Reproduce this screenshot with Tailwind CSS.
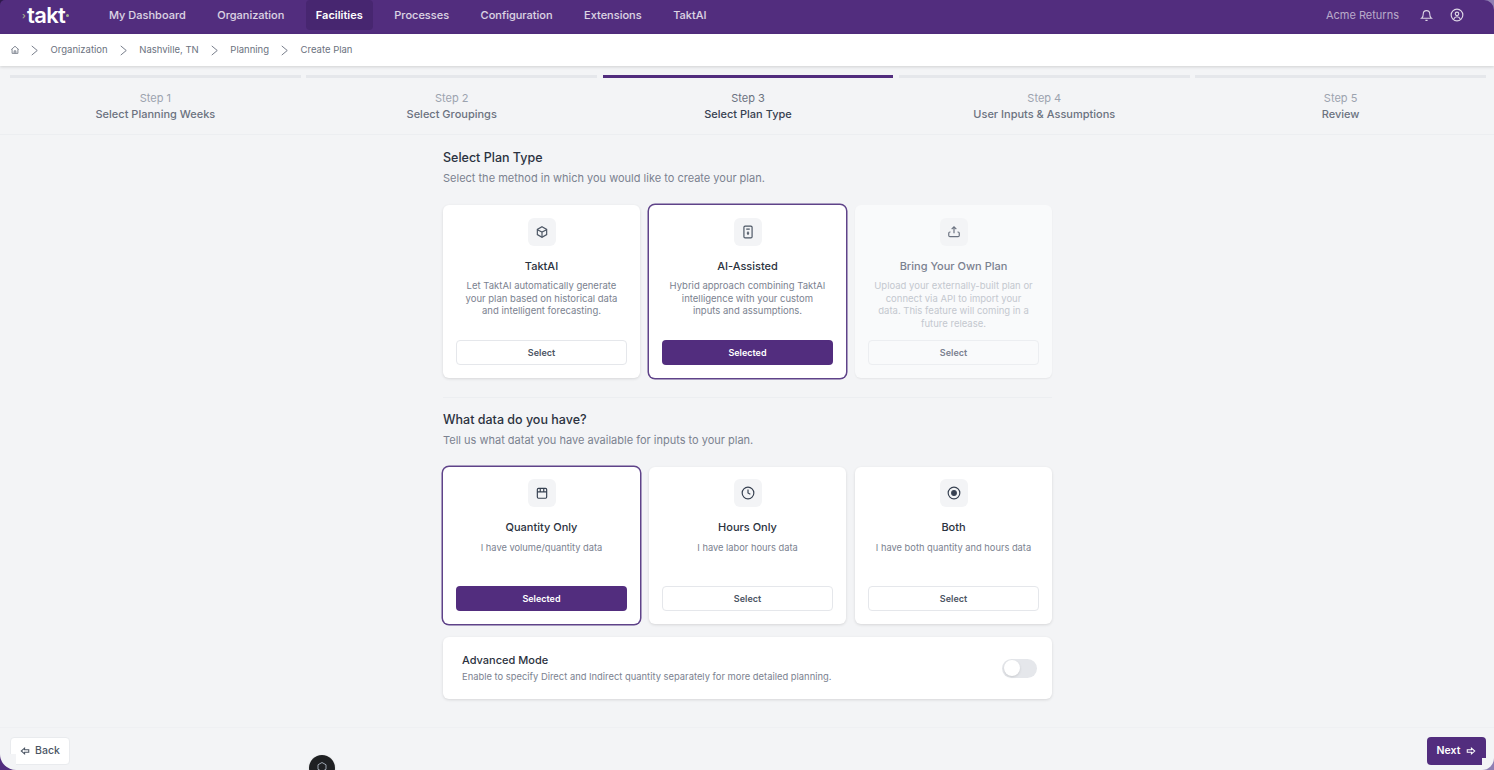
<!DOCTYPE html>
<html lang="en">
<head>
  <meta charset="UTF-8" />
  <title>Create Plan</title>
  <script src="https://cdn.jsdelivr.net/npm/@tailwindcss/browser@4"></script>
</head>
<body class="relative h-[770px] w-[1494px] overflow-hidden bg-[#f3f4f6] font-['Inter',sans-serif] text-[#2b3240]">

  <!-- nav -->
  <header class="flex h-[34px] items-center justify-between bg-[#522d7e] pr-[30px] pb-[4px] pl-[22px] text-[11px] font-medium text-white/80">
    <div class="flex items-center">
      <div class="flex w-[77px] items-center text-[22px] leading-none font-semibold tracking-[-0.7px] text-white"><span class="mr-[2px] text-[9px] text-[#a7b48f]">›</span>takt<span class="ml-[1px] h-[3px] w-[3px] rounded-full bg-[#a7b48f]"></span></div>
      <nav class="flex items-center gap-[11.500px]">
        <a class="px-[10px] py-[7px]">My Dashboard</a>
        <a class="px-[10px] py-[7px]">Organization</a>
        <a class="rounded bg-[#472670] px-[10px] py-[7px] font-semibold text-white">Facilities</a>
        <a class="px-[10px] py-[7px]">Processes</a>
        <a class="px-[10px] py-[7px]">Configuration</a>
        <a class="px-[10px] py-[7px]">Extensions</a>
        <a class="px-[10px] py-[7px]">TaktAI</a>
      </nav>
    </div>
    <div class="flex items-center">
      <span class="font-normal text-white/60">Acme Returns</span>
      <svg class="ml-[21px] h-[13px] w-[13px]" viewBox="0 0 24 24" fill="none" stroke="currentColor" stroke-width="2"><path d="M6 9a6 6 0 0 1 12 0c0 6 3 8 3 8H3s3-2 3-8M10 21h4"/></svg>
      <svg class="ml-[17px] h-[14px] w-[14px]" viewBox="0 0 24 24" fill="none" stroke="currentColor" stroke-width="2"><circle cx="12" cy="12" r="10"/><circle cx="12" cy="10" r="3"/><path d="M6.500 19c1-3 3-4 5.500-4s4.500 1 5.500 4"/></svg>
    </div>
  </header>

  <!-- breadcrumb -->
  <div class="flex h-[32px] items-center gap-[11.300px] bg-white pl-[10px] text-[9.500px] text-[#6b7280] shadow-[0_1px_3px_rgba(0,0,0,0.15)]">
    <svg class="h-[10px] w-[10px]" viewBox="0 0 24 24" fill="none" stroke="currentColor" stroke-width="2"><path d="M3 11l9-8 9 8M5 10v10h14V10M10 20v-6h4v6"/></svg>
    <svg class="-ml-[1px] h-[11px] w-[9px]" viewBox="0 0 8 12" fill="none" stroke="currentColor"><path d="M1 1l6 5-6 5"/></svg>
    <span>Organization</span>
    <svg class="h-[11px] w-[9px]" viewBox="0 0 8 12" fill="none" stroke="currentColor"><path d="M1 1l6 5-6 5"/></svg>
    <span>Nashville, TN</span>
    <svg class="h-[11px] w-[9px]" viewBox="0 0 8 12" fill="none" stroke="currentColor"><path d="M1 1l6 5-6 5"/></svg>
    <span>Planning</span>
    <svg class="h-[11px] w-[9px]" viewBox="0 0 8 12" fill="none" stroke="currentColor"><path d="M1 1l6 5-6 5"/></svg>
    <span>Create Plan</span>
  </div>

  <!-- steps -->
  <div class="grid h-[69px] grid-cols-5 gap-[5.500px] border-b border-[#eceef1] pt-[9px] pr-[8px] pl-[10px] text-center text-[11px] leading-[15.500px] text-[#6b7280]">
    <div><div class="mb-[13px] h-[3px] bg-[#e5e7eb]"></div><div class="text-[#9ca3af]">Step 1</div><div class="font-medium">Select Planning Weeks</div></div>
    <div><div class="mb-[13px] h-[3px] bg-[#e5e7eb]"></div><div class="text-[#9ca3af]">Step 2</div><div class="font-medium">Select Groupings</div></div>
    <div><div class="mb-[13px] h-[3px] bg-[#522d7e]"></div><div class="text-[#6b7280]">Step 3</div><div class="font-medium text-[#374151]">Select Plan Type</div></div>
    <div><div class="mb-[13px] h-[3px] bg-[#e5e7eb]"></div><div class="text-[#9ca3af]">Step 4</div><div class="font-medium">User Inputs &amp; Assumptions</div></div>
    <div><div class="mb-[13px] h-[3px] bg-[#e5e7eb]"></div><div class="text-[#9ca3af]">Step 5</div><div class="font-medium">Review</div></div>
  </div>

  <!-- main -->
  <main class="ml-[443px] w-[609px] pt-[14px]">
    <h2 class="text-[12.500px] leading-[17px] font-medium">Select Plan Type</h2>
    <p class="mt-[4px] text-[11px] leading-[16px] text-[#7b8290]">Select the method in which you would like to create your plan.</p>

    <div class="mt-[19px] grid grid-cols-3 gap-[9px]">
      <div class="flex h-[173px] flex-col items-center rounded-md bg-white px-[13px] pt-[13px] pb-[13px] text-center shadow-[0_1px_3px_rgba(0,0,0,0.12)]">
        <div class="flex h-[28px] w-[28px] items-center justify-center rounded-md bg-[#f3f4f6] text-[#4b5563]">
          <svg class="h-[14px] w-[14px]" viewBox="0 0 24 24" fill="none" stroke="currentColor" stroke-width="2"><path d="M12 3l8 4.500v9L12 21l-8-4.500v-9z"/><path d="M4 8l8 4 8-4M12 12v9"/></svg>
        </div>
        <h3 class="mt-[12px] text-[11px] leading-[16px] font-medium">TaktAI</h3>
        <p class="mt-[6px] text-[9.500px] leading-[12.500px] text-[#7b8290]">Let TaktAI automatically generate<br>your plan based on historical data<br>and intelligent forecasting.</p>
        <button class="mt-auto h-[25px] w-full rounded border border-[#e5e7eb] bg-white text-[9px] font-semibold text-[#4b5563]">Select</button>
      </div>
      <div class="flex h-[173px] flex-col items-center rounded-md bg-white px-[13px] pt-[13px] pb-[13px] text-center shadow-[0_0_0_1.500px_#5f4389]">
        <div class="flex h-[28px] w-[28px] items-center justify-center rounded-md bg-[#f3f4f6] text-[#4b5563]">
          <svg class="h-[14px] w-[14px]" viewBox="0 0 24 24" fill="none" stroke="currentColor" stroke-width="2"><rect x="5" y="2" width="14" height="20" rx="2"/><path d="M9 7h6M12 11v6M10 14h4"/></svg>
        </div>
        <h3 class="mt-[12px] text-[11px] leading-[16px] font-medium">AI-Assisted</h3>
        <p class="mt-[6px] text-[9.500px] leading-[12.500px] text-[#7b8290]">Hybrid approach combining TaktAI<br>intelligence with your custom<br>inputs and assumptions.</p>
        <button class="mt-auto h-[25px] w-full rounded bg-[#522d7e] text-[9px] font-semibold text-white">Selected</button>
      </div>
      <div class="flex h-[173px] flex-col items-center rounded-md bg-[#f9fafb] px-[13px] pt-[13px] pb-[13px] text-center shadow-[0_1px_2px_rgba(0,0,0,0.06)]">
        <div class="flex h-[28px] w-[28px] items-center justify-center rounded-md bg-[#f3f4f6] text-[#6b7280]">
          <svg class="h-[14px] w-[14px]" viewBox="0 0 24 24" fill="none" stroke="currentColor" stroke-width="2"><path d="M12 14V3M8 7l4-4 4 4M6 12H5a2 2 0 0 0-2 2v4a2 2 0 0 0 2 2h14a2 2 0 0 0 2-2v-4a2 2 0 0 0-2-2h-1"/></svg>
        </div>
        <h3 class="mt-[12px] text-[11px] leading-[16px] font-medium text-[#7b8190]">Bring Your Own Plan</h3>
        <p class="mt-[6px] text-[9.500px] leading-[12.500px] text-[#c4c8cf]">Upload your externally-built plan or<br>connect via API to import your<br>data. This feature will coming in a<br>future release.</p>
        <button class="mt-auto h-[25px] w-full rounded border border-[#eceef1] text-[9px] font-semibold text-[#7b8190]">Select</button>
      </div>
    </div>

    <div class="mt-[19px] h-px bg-[#eceef1]"></div>

    <h2 class="mt-[13px] text-[12.500px] leading-[17px] font-medium">What data do you have?</h2>
    <p class="mt-[4px] text-[11px] leading-[16px] text-[#7b8290]">Tell us what datat you have available for inputs to your plan.</p>

    <div class="mt-[19px] grid grid-cols-3 gap-[9px]">
      <div class="flex h-[157px] flex-col items-center rounded-md bg-white px-[13px] pt-[12px] pb-[13px] text-center shadow-[0_0_0_1.500px_#5f4389]">
        <div class="flex h-[28px] w-[28px] items-center justify-center rounded-md bg-[#f3f4f6] text-[#374151]">
          <svg class="h-[14px] w-[14px]" viewBox="0 0 24 24" fill="none" stroke="currentColor" stroke-width="2"><rect x="4" y="4" width="16" height="17" rx="2"/><path d="M4 10h16M9 4v6M15 4v6"/></svg>
        </div>
        <h3 class="mt-[12px] text-[11px] leading-[16px] font-medium">Quantity Only</h3>
        <p class="mt-[7px] text-[9.300px] leading-[12.500px] text-[#7b8290]">I have volume/quantity data</p>
        <button class="mt-auto h-[25px] w-full rounded bg-[#522d7e] text-[9px] font-semibold text-white">Selected</button>
      </div>
      <div class="flex h-[157px] flex-col items-center rounded-md bg-white px-[13px] pt-[12px] pb-[13px] text-center shadow-[0_1px_3px_rgba(0,0,0,0.12)]">
        <div class="flex h-[28px] w-[28px] items-center justify-center rounded-md bg-[#f3f4f6] text-[#374151]">
          <svg class="h-[14px] w-[14px]" viewBox="0 0 24 24" fill="none" stroke="currentColor" stroke-width="2"><circle cx="12" cy="12" r="10"/><path d="M12 6v6l4 2"/></svg>
        </div>
        <h3 class="mt-[12px] text-[11px] leading-[16px] font-medium">Hours Only</h3>
        <p class="mt-[7px] text-[9.300px] leading-[12.500px] text-[#7b8290]">I have labor hours data</p>
        <button class="mt-auto h-[25px] w-full rounded border border-[#e5e7eb] bg-white text-[9px] font-semibold text-[#4b5563]">Select</button>
      </div>
      <div class="flex h-[157px] flex-col items-center rounded-md bg-white px-[13px] pt-[12px] pb-[13px] text-center shadow-[0_1px_3px_rgba(0,0,0,0.12)]">
        <div class="flex h-[28px] w-[28px] items-center justify-center rounded-md bg-[#f3f4f6] text-[#374151]">
          <svg class="h-[14px] w-[14px]" viewBox="0 0 24 24" fill="none" stroke="currentColor" stroke-width="2"><circle cx="12" cy="12" r="10"/><circle cx="12" cy="12" r="4" fill="currentColor"/></svg>
        </div>
        <h3 class="mt-[12px] text-[11px] leading-[16px] font-medium">Both</h3>
        <p class="mt-[7px] text-[9.300px] leading-[12.500px] text-[#7b8290]">I have both quantity and hours data</p>
        <button class="mt-auto h-[25px] w-full rounded border border-[#e5e7eb] bg-white text-[9px] font-semibold text-[#4b5563]">Select</button>
      </div>
    </div>

    <div class="mt-[13px] flex h-[62px] items-center justify-between rounded-md bg-white pr-[15px] pl-[19px] shadow-[0_1px_3px_rgba(0,0,0,0.12)]">
      <div>
        <h3 class="text-[11px] leading-[16px] font-medium">Advanced Mode</h3>
        <p class="mt-[3px] text-[9.400px] leading-[12.500px] text-[#7b8290]">Enable to specify Direct and Indirect quantity separately for more detailed planning.</p>
      </div>
      <div class="flex h-[19px] w-[35px] items-center rounded-full bg-[#e5e7eb] p-[1.500px]"><div class="h-[16px] w-[16px] rounded-full bg-white shadow-sm"></div></div>
    </div>
  </main>

  <!-- footer -->
  <div class="absolute inset-x-0 bottom-0 flex h-[43px] items-start justify-between border-t border-[#eff0f3] pt-[9px] pr-[8px] pl-[10px]">
    <button class="flex h-[28px] w-[60px] items-center justify-center gap-[5px] rounded border border-[#e9ebee] bg-white text-[10.500px] font-medium text-[#4b5563]">
      <svg class="h-[10px] w-[10px]" viewBox="0 0 24 24" fill="none" stroke="currentColor" stroke-width="2.500"><path d="M11 5l-8 7 8 7v-4h10V9H11z"/></svg>
      Back
    </button>
    <button class="flex h-[28px] w-[59px] items-center justify-center gap-[6px] rounded bg-[#522d7e] text-[10.500px] font-semibold text-white">
      Next
      <svg class="h-[10px] w-[10px]" viewBox="0 0 24 24" fill="none" stroke="currentColor" stroke-width="2.500"><path d="M13 5l8 7-8 7v-4H3V9h10z"/></svg>
    </button>
  </div>

  <!-- floating widget, cut off by the window -->
  <div class="absolute top-[755px] left-[309px] flex h-[26px] w-[26px] items-start justify-center rounded-full bg-[#1f2023] pt-[6px] text-[#9ca3af] shadow">
    <svg class="h-[12px] w-[12px]" viewBox="0 0 24 24" fill="none" stroke="currentColor" stroke-width="2"><path d="M12 3l8 4.500v9L12 21l-8-4.500v-9z"/></svg>
  </div>

  <!-- window corners: rounded window over the wallpaper -->
  <div class="absolute bottom-0 left-0 h-[16px] w-[16px] bg-[#522d7e]"><div class="h-full w-full rounded-bl-[16px] bg-[#f3f4f6]"></div></div>
  <div class="absolute right-0 bottom-0 h-[12px] w-[12px] bg-[#8f7fb3]"><div class="h-full w-full rounded-br-[12px] bg-[#f3f4f6]"></div></div>
  <div class="absolute top-0 right-0 h-[10px] w-[10px] bg-[#8f7fb3]"><div class="h-full w-full rounded-tr-[10px] bg-[#522d7e]"></div></div>
  <div class="absolute top-0 left-0 h-[5px] w-[5px] bg-[#2f1a4c]"><div class="h-full w-full rounded-tl-[5px] bg-[#522d7e]"></div></div>
</body>
</html>
